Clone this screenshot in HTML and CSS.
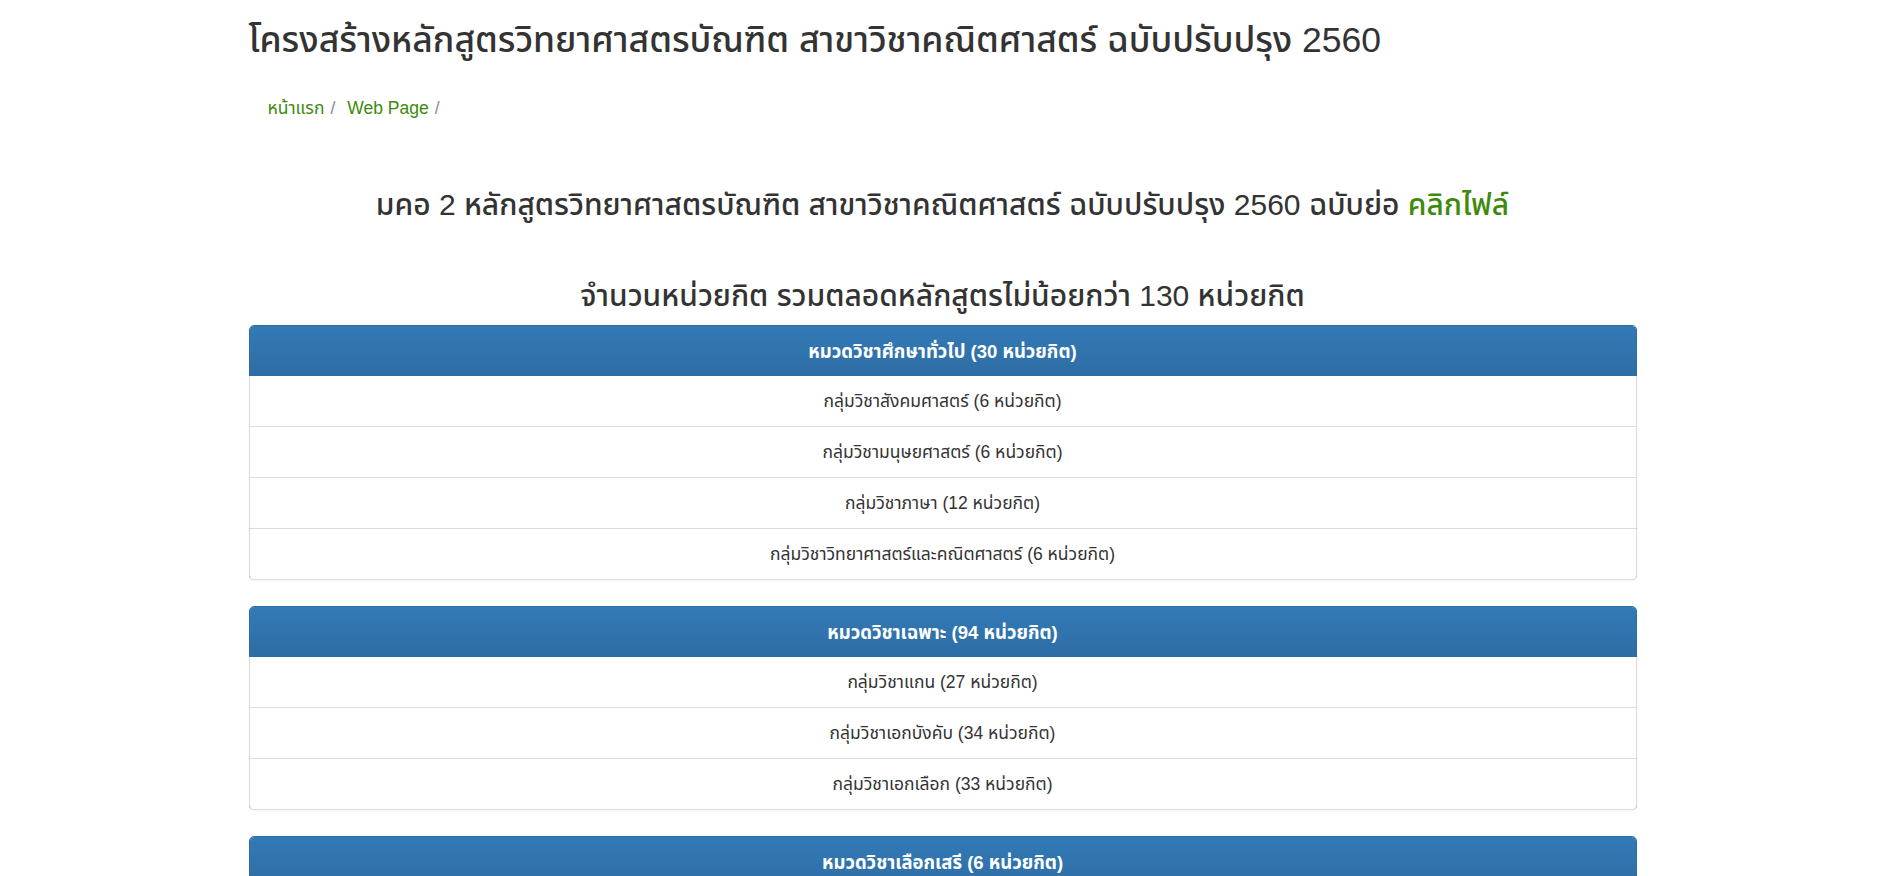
FILE: index.html
```html
<!DOCTYPE html>
<html lang="th">
<head>
<meta charset="utf-8">
<title>โครงสร้างหลักสูตร</title>
<link rel="stylesheet" href="styles.css">
</head>
<body>
<div class="container">
  <h2 class="page-title">โครงสร้างหลักสูตรวิทยาศาสตรบัณฑิต สาขาวิชาคณิตศาสตร์ ฉบับปรับปรุง 2560</h2>
  <ol class="breadcrumb">
    <li><a href="#">หน้าแรก</a></li>
    <li><a href="#">Web Page</a></li>
  </ol>
  <div class="content">
    <h3 class="center-head doc-head">มคอ 2 หลักสูตรวิทยาศาสตรบัณฑิต สาขาวิชาคณิตศาสตร์ ฉบับปรับปรุง 2560 ฉบับย่อ <a href="#">คลิกไฟล์</a></h3>
    <h3 class="center-head credit-head">จำนวนหน่วยกิต รวมตลอดหลักสูตรไม่น้อยกว่า 130 หน่วยกิต</h3>

    <div class="panel">
      <div class="panel-heading">หมวดวิชาศึกษาทั่วไป (30 หน่วยกิต)</div>
      <ul class="list-group">
        <li class="list-item">กลุ่มวิชาสังคมศาสตร์ (6 หน่วยกิต)</li>
        <li class="list-item">กลุ่มวิชามนุษยศาสตร์ (6 หน่วยกิต)</li>
        <li class="list-item">กลุ่มวิชาภาษา (12 หน่วยกิต)</li>
        <li class="list-item">กลุ่มวิชาวิทยาศาสตร์และคณิตศาสตร์ (6 หน่วยกิต)</li>
      </ul>
    </div>

    <div class="panel">
      <div class="panel-heading">หมวดวิชาเฉพาะ (94 หน่วยกิต)</div>
      <ul class="list-group">
        <li class="list-item">กลุ่มวิชาแกน (27 หน่วยกิต)</li>
        <li class="list-item">กลุ่มวิชาเอกบังคับ (34 หน่วยกิต)</li>
        <li class="list-item">กลุ่มวิชาเอกเลือก (33 หน่วยกิต)</li>
      </ul>
    </div>

    <div class="panel">
      <div class="panel-heading">หมวดวิชาเลือกเสรี (6 หน่วยกิต)</div>
    </div>
  </div>
</div>
</body>
</html>
```

FILE: styles.css
```css
html, body {
  margin: 0;
  padding: 0;
  background: #ffffff;
}
body {
  font-family: "Liberation Sans", Arial, "Noto Sans Thai", "Leelawadee UI", Tahoma, sans-serif;
  font-size: 17.5px;
  line-height: 25px;
  color: #333333;
}
a {
  color: #3e8a0c;
  text-decoration: none;
}
.container {
  max-width: 1388px;
  margin: 0 auto;
  padding: 0 0 40px 1px;
}
.page-title {
  margin: 20px 0 25px 0;
  font-size: 35.5px;
  line-height: 41px;
  font-weight: 500;
  color: #333333;
}
.breadcrumb {
  list-style: none;
  margin: 0 0 25px 0;
  padding: 10px 19px;
  display: flex;
  font-size: 17.5px;
}
.breadcrumb li::after {
  content: "/";
  color: #8a8a8a;
  padding: 0 6px 0 6px;
}
.breadcrumb li + li {
  padding-left: 6px;
}
.center-head {
  text-align: center;
  font-size: 30px;
  line-height: 33px;
  font-weight: 500;
  margin: 0;
}
.doc-head {
  margin-top: 57px;
}
.credit-head {
  margin-top: 58px;
  margin-bottom: 13px;
}
.panel {
  border: 1px solid #2e6da4;
  border-radius: 5px;
  margin-bottom: 26px;
  box-shadow: 0 1px 2px rgba(0,0,0,0.05);
  background: #fff;
}
.panel-heading {
  background: linear-gradient(to bottom, #337ab7 0%, #2e6da4 100%);
  color: #ffffff;
  font-weight: bold;
  font-size: 18.5px;
  text-align: center;
  padding: 12.5px 19px;
  border-radius: 4px 4px 0 0;
}
.list-group {
  list-style: none;
  margin: 0;
  padding: 0;
  background: #fff;
  border-radius: 0 0 4px 4px;
}
.list-item {
  padding: 12.5px 19px;
  text-align: center;
  border-top: 1px solid #dddddd;
  margin-left: -1px;
  margin-right: -1px;
  border-left: 1px solid #dddddd;
  border-right: 1px solid #dddddd;
}
.list-item:first-child {
  border-top: 0;
}
.list-item:last-child {
  border-bottom: 1px solid #dddddd;
  margin-bottom: -1px;
  border-radius: 0 0 5px 5px;
}
```
